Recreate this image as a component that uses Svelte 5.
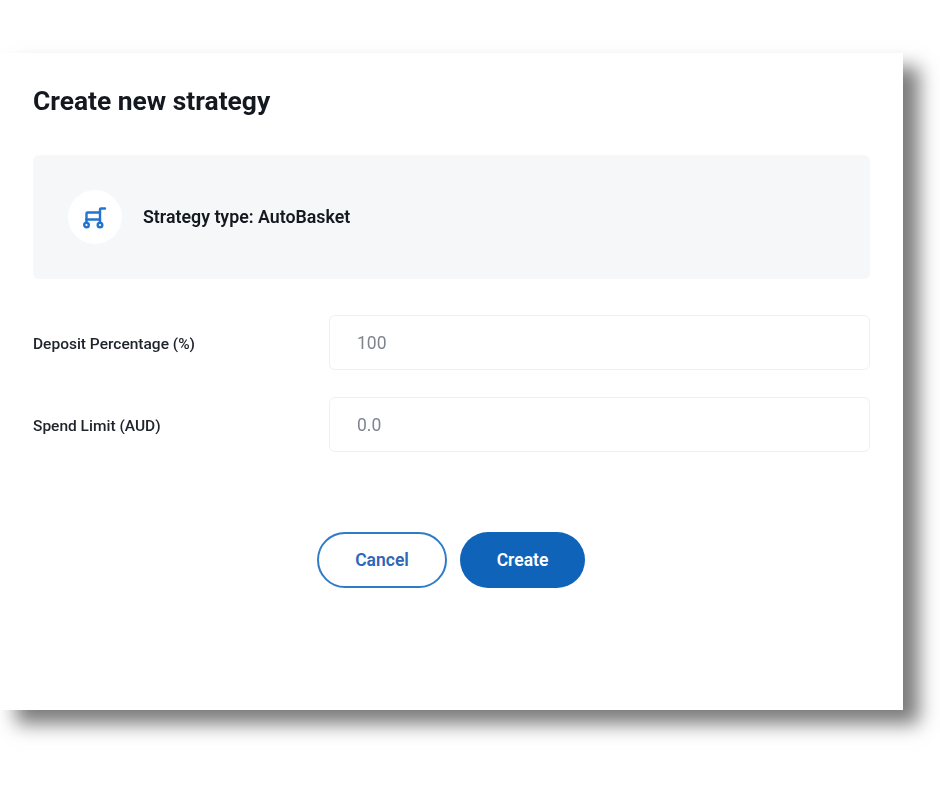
<script>
  const fields = [
    { label: 'Deposit Percentage (%)', placeholder: '100' },
    { label: 'Spend Limit (AUD)', placeholder: '0.0' }
  ];
</script>

<div class="page">
  <main class="dialog">
    <h1>Create new strategy</h1>

    <section class="type-card">
      <div class="icon-circle">
        <svg width="24" height="24" viewBox="0 0 24 24" fill="none" stroke="#2574cc" stroke-width="2.400" stroke-linecap="round">
          <path d="M22 3.500h-4a1 1 0 0 0-1 1v13" />
          <path d="M17 7.500H4.500a1 1 0 0 0-1 1v9" />
          <path d="M3.500 14.500h13.500" />
          <circle cx="3.500" cy="20" r="2.300" />
          <circle cx="17" cy="20" r="2.300" />
        </svg>
      </div>
      <span>Strategy type: AutoBasket</span>
    </section>

    <form class="fields">
      {#each fields as field}
        <label class="row">
          <span>{field.label}</span>
          <input type="text" placeholder={field.placeholder} />
        </label>
      {/each}
    </form>

    <div class="actions">
      <button class="cancel" type="button">Cancel</button>
      <button class="create" type="button">Create</button>
    </div>
  </main>
</div>

<style>
  :global(body) {
    background: #fff;
  }

  .page {
    box-sizing: border-box;
    height: 788px;
    padding-top: 53px;
    overflow: hidden;
  }

  .dialog {
    box-sizing: border-box;
    width: 903px;
    height: 657px;
    padding: 30px 33px 0;
    background: #fff;
    box-shadow: 16px 14px 18px rgba(0, 0, 0, 0.52);
    font-family: Roboto, sans-serif;
    color: #14181f;
    filter: blur(0.35px);
  }

  h1 {
    margin: 0;
    font-size: 26.400px;
    line-height: 36px;
    font-weight: 700;
  }

  .type-card {
    display: flex;
    align-items: center;
    gap: 21px;
    height: 124px;
    margin-top: 36px;
    padding-left: 35px;
    border-radius: 6px;
    background: #f5f7f9;
    font-size: 17.800px;
    font-weight: 600;
  }

  .type-card span {
    padding-bottom: 2px;
  }

  .icon-circle {
    display: flex;
    align-items: center;
    justify-content: center;
    width: 54px;
    height: 54px;
    border-radius: 50%;
    background: #fff;
  }

  .fields {
    display: flex;
    flex-direction: column;
    gap: 27px;
    margin-top: 36px;
  }

  .row {
    display: grid;
    grid-template-columns: 296px 1fr;
    align-items: center;
    font-size: 15.500px;
    font-weight: 500;
    color: #20252d;
  }

  .row span {
    padding-top: 2px;
  }

  input {
    box-sizing: border-box;
    width: 100%;
    height: 55px;
    padding: 0 27px;
    border: 1px solid #eff0f2;
    border-radius: 6px;
    background: #fff;
    font-family: inherit;
    font-size: 17.500px;
    outline: none;
  }

  input::placeholder {
    color: #7f858e;
    opacity: 1;
  }

  .actions {
    display: flex;
    justify-content: center;
    gap: 13px;
    margin-top: 80px;
    padding-right: 1px;
  }

  button {
    box-sizing: border-box;
    height: 56px;
    border-radius: 28px;
    font-family: inherit;
    font-size: 17.500px;
    font-weight: 600;
  }

  .cancel {
    width: 130px;
    border: 2px solid #2f7bc8;
    background: #fff;
    color: #2f66b5;
  }

  .create {
    width: 125px;
    border: 0;
    background: #0f63b9;
    color: #fff;
  }
</style>
